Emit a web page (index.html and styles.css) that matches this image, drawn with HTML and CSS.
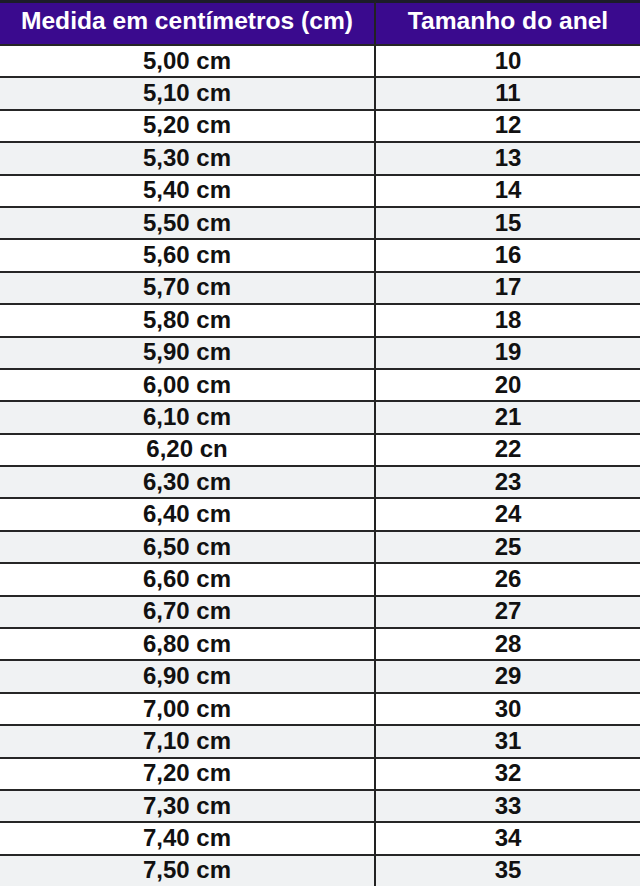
FILE: index.html
```html
<!DOCTYPE html>
<html lang="pt">
<head>
<meta charset="utf-8">
<title>Tabela de medidas de anel</title>
<link rel="stylesheet" href="styles.css">
</head>
<body>
<table class="sizes">
  <thead>
    <tr><th class="c1">Medida em centímetros (cm)</th><th class="c2">Tamanho do anel</th></tr>
  </thead>
  <tbody>
    <tr><td class="c1">5,00 cm</td><td class="c2">10</td></tr>
    <tr><td class="c1">5,10 cm</td><td class="c2">11</td></tr>
    <tr><td class="c1">5,20 cm</td><td class="c2">12</td></tr>
    <tr><td class="c1">5,30 cm</td><td class="c2">13</td></tr>
    <tr><td class="c1">5,40 cm</td><td class="c2">14</td></tr>
    <tr><td class="c1">5,50 cm</td><td class="c2">15</td></tr>
    <tr><td class="c1">5,60 cm</td><td class="c2">16</td></tr>
    <tr><td class="c1">5,70 cm</td><td class="c2">17</td></tr>
    <tr><td class="c1">5,80 cm</td><td class="c2">18</td></tr>
    <tr><td class="c1">5,90 cm</td><td class="c2">19</td></tr>
    <tr><td class="c1">6,00 cm</td><td class="c2">20</td></tr>
    <tr><td class="c1">6,10 cm</td><td class="c2">21</td></tr>
    <tr><td class="c1">6,20 cn</td><td class="c2">22</td></tr>
    <tr><td class="c1">6,30 cm</td><td class="c2">23</td></tr>
    <tr><td class="c1">6,40 cm</td><td class="c2">24</td></tr>
    <tr><td class="c1">6,50 cm</td><td class="c2">25</td></tr>
    <tr><td class="c1">6,60 cm</td><td class="c2">26</td></tr>
    <tr><td class="c1">6,70 cm</td><td class="c2">27</td></tr>
    <tr><td class="c1">6,80 cm</td><td class="c2">28</td></tr>
    <tr><td class="c1">6,90 cm</td><td class="c2">29</td></tr>
    <tr><td class="c1">7,00 cm</td><td class="c2">30</td></tr>
    <tr><td class="c1">7,10 cm</td><td class="c2">31</td></tr>
    <tr><td class="c1">7,20 cm</td><td class="c2">32</td></tr>
    <tr><td class="c1">7,30 cm</td><td class="c2">33</td></tr>
    <tr><td class="c1">7,40 cm</td><td class="c2">34</td></tr>
    <tr><td class="c1">7,50 cm</td><td class="c2">35</td></tr>
  </tbody>
</table>
</body>
</html>
```
FILE: styles.css
```css
html, body {
  margin: 0;
  padding: 0;
  background: #ffffff;
}

.sizes {
  width: 640px;
  border-collapse: separate;
  border-spacing: 0;
  table-layout: fixed;
  font-family: "Liberation Sans", Arial, sans-serif;
  font-weight: bold;
  font-size: 24px;
  color: #111111;
}

.sizes th,
.sizes td {
  box-sizing: border-box;
  padding: 0 0 1px 0;
  text-align: center;
  vertical-align: middle;
  line-height: 1;
}

.sizes .c1 {
  width: 376px;
  border-right: 2px solid #222222;
}

.sizes th {
  height: 44px;
  background: #3a0a8e;
  color: #ffffff;
  font-size: 24.6px;
  border-top: 3px solid #1c1c2a;
  padding-bottom: 4px;
}

.sizes thead tr {
  height: 44px;
}

.sizes tbody tr {
  height: 32.4px;
}

.sizes tbody td {
  height: 32.4px;
  border-top: 2px solid #262626;
}

.sizes tbody tr:nth-child(even) td {
  background: #f0f2f3;
}
```
